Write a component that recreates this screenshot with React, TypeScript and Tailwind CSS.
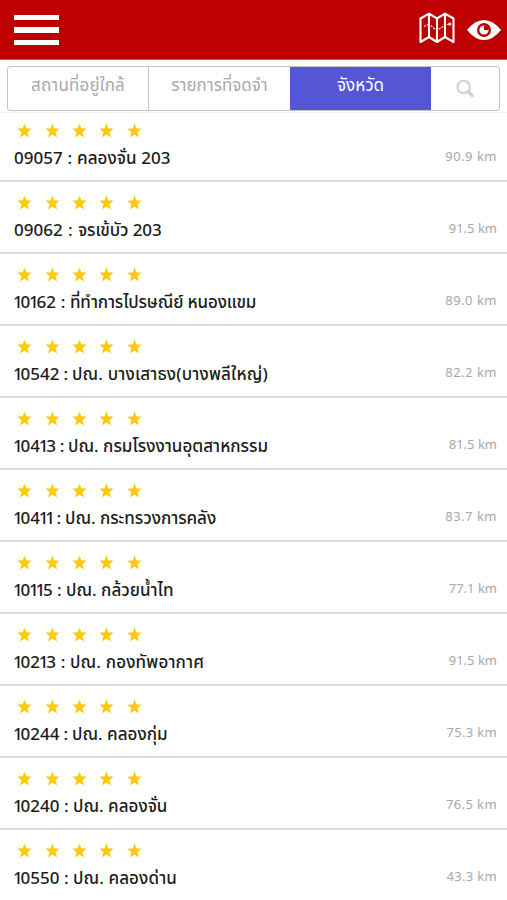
type Office = { code: string; name: string; km: string; codeFit: string; nameFit: string; kmFit: string };

const offices: Office[] = [
  { code: "09057", name: "คลองจั่น 203", km: "90.9", codeFit: "w-[63px]", nameFit: "tracking-[0.05px]", kmFit: "tracking-[0.5px]" },
  { code: "09062", name: "จรเข้บัว 203", km: "91.5", codeFit: "w-[64px]", nameFit: "tracking-[-0.1px]", kmFit: "tracking-[0px]" },
  { code: "10162", name: "ที่ทำการไปรษณีย์ หนองแขม", km: "89.0", codeFit: "w-[56px]", nameFit: "tracking-[-0.15px]", kmFit: "tracking-[0.5px]" },
  { code: "10542", name: "ปณ. บางเสาธง(บางพลีใหญ่)", km: "82.2", codeFit: "w-[58px]", nameFit: "tracking-[0.15px]", kmFit: "tracking-[0.5px]" },
  { code: "10413", name: "ปณ. กรมโรงงานอุตสาหกรรม", km: "81.5", codeFit: "w-[54px]", nameFit: "tracking-[0px]", kmFit: "tracking-[0px]" },
  { code: "10411", name: "ปณ. กระทรวงการคลัง", km: "83.7", codeFit: "w-[51px]", nameFit: "tracking-[-0.05px]", kmFit: "tracking-[0.5px]" },
  { code: "10115", name: "ปณ. กล้วยน้ำไท", km: "77.1", codeFit: "w-[52px]", nameFit: "tracking-[0px]", kmFit: "tracking-[0px]" },
  { code: "10213", name: "ปณ. กองทัพอากาศ", km: "91.5", codeFit: "w-[56px]", nameFit: "tracking-[0.15px]", kmFit: "tracking-[0px]" },
  { code: "10244", name: "ปณ. คลองกุ่ม", km: "75.3", codeFit: "w-[58px]", nameFit: "tracking-[0px]", kmFit: "tracking-[0.3px]" },
  { code: "10240", name: "ปณ. คลองจั่น", km: "76.5", codeFit: "w-[59px]", nameFit: "tracking-[0px]", kmFit: "tracking-[0.4px]" },
  { code: "10550", name: "ปณ. คลองด่าน", km: "43.3", codeFit: "w-[59px]", nameFit: "tracking-[0.1px]", kmFit: "tracking-[0.3px]" },
];

function Star() {
  return (
    <svg viewBox="0 0 24 24" className="size-[15px] fill-[#fdca12]">
      <path d="M12 0.5 14.9 8.5 23.6 9 17 14.4 19.3 23.3 12 18.4 4.7 23.3 7 14.4 0.4 9 9.1 8.5Z" />
    </svg>
  );
}

function MapIcon() {
  return (
    <svg viewBox="0 0 36 32" className="h-8 w-9" fill="none" stroke="white" strokeWidth="2.1" strokeLinejoin="round">
      <path d="M1.5 6.5 10 1.7 18 6.5 26 1.7 34.5 6.5V30L26 25 18 30 10 25 1.5 30Z" />
      <path d="M10 1.5V25M18 6.5V30M26 1.5V25" />
      <path d="M5 14.5 9 12.5M12 13.5 15 16.5 18 18 22 16 26 13M28 12.5H30" strokeWidth="1.1" strokeDasharray="2 1.2" />
      <circle cx="30.7" cy="12" r="1.6" fill="white" stroke="none" />
    </svg>
  );
}

function EyeIcon() {
  return (
    <svg viewBox="0 0 34 22" className="h-[22px] w-[34px]">
      <path d="M0 11Q8 1 17 1T34 11Q26 21 17 21T0 11Z" fill="white" />
      <circle cx="17" cy="11" r="7" fill="#be0000" />
      <circle cx="17" cy="11" r="4.6" fill="white" />
      <path d="M17 6.2V11H21.8A4.8 4.8 0 0 0 17 6.2Z" fill="#be0000" />
    </svg>
  );
}

function SearchIcon() {
  return (
    <svg viewBox="0 0 20 20" className="size-5" fill="none" stroke="#d2d2d2" strokeLinecap="round">
      <circle cx="8.6" cy="8" r="6.2" strokeWidth="2.2" />
      <path d="M13.4 12.8 17.2 16.6" strokeWidth="3.2" />
    </svg>
  );
}

// The digit 1 is set on a narrower advance than the other figures.
function Code({ value }: { value: string }) {
  return (
    <span>
      {value.split("").map((d, i) => (
        <span key={i} className={d === "1" ? (i === 0 ? "-ml-px tracking-[-2.2px]" : "-ml-[1.2px] tracking-[-2.2px]") : "tracking-[0px]"}>
          {d}
        </span>
      ))}
    </span>
  );
}

export default function App() {
  return (
    <div className="h-[900px] w-[507px] overflow-hidden bg-white font-['Noto_Sans_Thai','Noto_Sans',sans-serif]">
      <header className="flex h-[60px] items-center justify-between border-b border-[#d65a5a] bg-[#be0000] pt-px pr-1.5 pl-3.5">
        <div className="flex flex-col gap-[7px]">
          <span className="h-[5.5px] w-[45px] bg-white" />
          <span className="h-[5.5px] w-[45px] bg-white" />
          <span className="h-[5.5px] w-[45px] bg-white" />
        </div>
        <div className="flex items-center gap-3">
          <div className="-mt-1"><MapIcon /></div>
          <EyeIcon />
        </div>
      </header>

      <nav className="h-[53px] border-b border-[#f1f1f1] px-[7px] pt-1.5">
        <div className="grid h-[45px] grid-cols-[141px_141px_141px_1fr] rounded-[3px] border-[1.5px] border-[#c4c4c4] text-[17px] whitespace-nowrap text-[#a9a9a9]">
          <div className="flex items-center justify-center border-r border-[#c4c4c4] pb-1">
            <span className="tracking-[0.15px]">สถานที่อยู่ใกล้</span>
          </div>
          <div className="flex items-center justify-center pb-1">รายการที่จดจำ</div>
          <div className="flex items-center justify-center bg-[#5456d6] pb-1 text-white">จังหวัด</div>
          <div className="flex items-center justify-center"><SearchIcon /></div>
        </div>
      </nav>

      <main className="-mt-[3px]">
        {offices.map((o) => (
          <div key={o.code} className="flex h-[72px] flex-col border-b-2 border-[#dadada] pt-[12.5px] pr-2.5 pl-3.5">
            <div className="flex gap-[12.3px] pl-[3.4px]">
              {[1, 2, 3, 4, 5].map((n) => <Star key={n} />)}
            </div>
            <div className="mt-[9px] flex h-6 items-center justify-between whitespace-nowrap">
              <div className="flex text-[17px] leading-6 font-medium text-[#1c1c1c]">
                <span className={`flex shrink-0 ${o.codeFit}`}>
                  <Code value={o.code} />
                  <span className="grow text-center">:</span>
                </span>
                <span className={o.nameFit}>{o.name}</span>
              </div>
              <span className={`-mt-0.5 text-[13px] text-[#a8a8a8] ${o.kmFit}`}>{o.km} km</span>
            </div>
          </div>
        ))}
      </main>
    </div>
  );
}
